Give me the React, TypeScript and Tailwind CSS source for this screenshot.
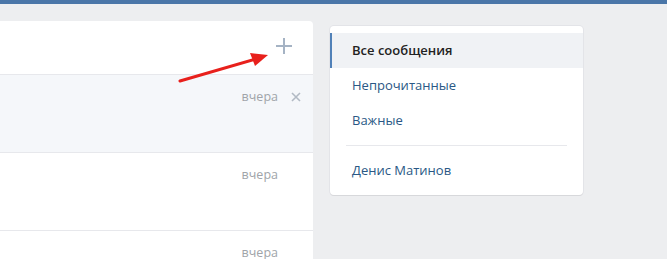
import React from 'react';

const rows = [
  { active: true },
  { active: false },
  { active: false },
];

const menu = ['Непрочитанные', 'Важные'];

export default function App() {
  return (
    <div className="relative w-[667px] h-[259px] overflow-hidden bg-[#edeef0] font-['Open_Sans',sans-serif]">
      <div className="h-1 bg-[#4a76a8]" />
      <div className="flex gap-[17px] items-start">
        {/* dialogs list */}
        <div className="w-[313px] mt-[17px] bg-white rounded-tr-[4px]">
          <div className="h-[54px] flex items-center justify-end pr-[21px] border-b border-[#e7e8ec]">
            <svg width="16" height="16" viewBox="0 0 16 16" className="mt-[-3px]">
              <path d="M8 0v16M0 8h16" stroke="#a5b3c4" strokeWidth="2" />
            </svg>
          </div>
          {rows.map((r, i) => (
            <div
              key={i}
              className={`h-[78px] flex items-start justify-end pt-[14px] pr-[12px] border-b border-[#e7e8ec] ${r.active ? 'bg-[#f5f7fa]' : 'bg-white'}`}
            >
              <span className="text-[12.5px] leading-[16px] text-[#a0a4a9]">вчера</span>
              {r.active ? (
                <svg width="10" height="10" viewBox="0 0 10 10" className="ml-[13px] mt-[3px]">
                  <path d="M1 1l8 8M9 1l-8 8" stroke="#b2bac4" strokeWidth="1.6" />
                </svg>
              ) : (
                <span className="w-[23px]" />
              )}
            </div>
          ))}
        </div>

        {/* filters */}
        <div className="w-[253px] mt-[22px] bg-white rounded-[4px] shadow-[0_1px_0_0_#d7d8db,0_0_0_1px_#e3e4e8] py-[7px] text-[13px]">
          <div className="h-[35px] flex items-center pl-[20px] bg-[#f0f2f5] border-l-2 border-[#5181b8] text-[#222] font-semibold">
            Все сообщения
          </div>
          {menu.map((m) => (
            <div key={m} className="h-[35px] flex items-center pl-[22px] text-[#2a5885]">
              {m}
            </div>
          ))}
          <div className="mx-4 my-[7px] h-px bg-[#e7e8ec]" />
          <div className="h-[35px] flex items-center pl-[22px] text-[#2a5885]">Денис Матинов</div>
        </div>
      </div>

      {/* annotation arrow */}
      <svg className="absolute left-0 top-0 pointer-events-none" width="667" height="259">
        <line x1="180" y1="81" x2="256" y2="59" stroke="#e8201c" strokeWidth="3" strokeLinecap="round" />
        <polygon points="268,55 250,53 255,66" fill="#e8201c" />
      </svg>
    </div>
  );
}
